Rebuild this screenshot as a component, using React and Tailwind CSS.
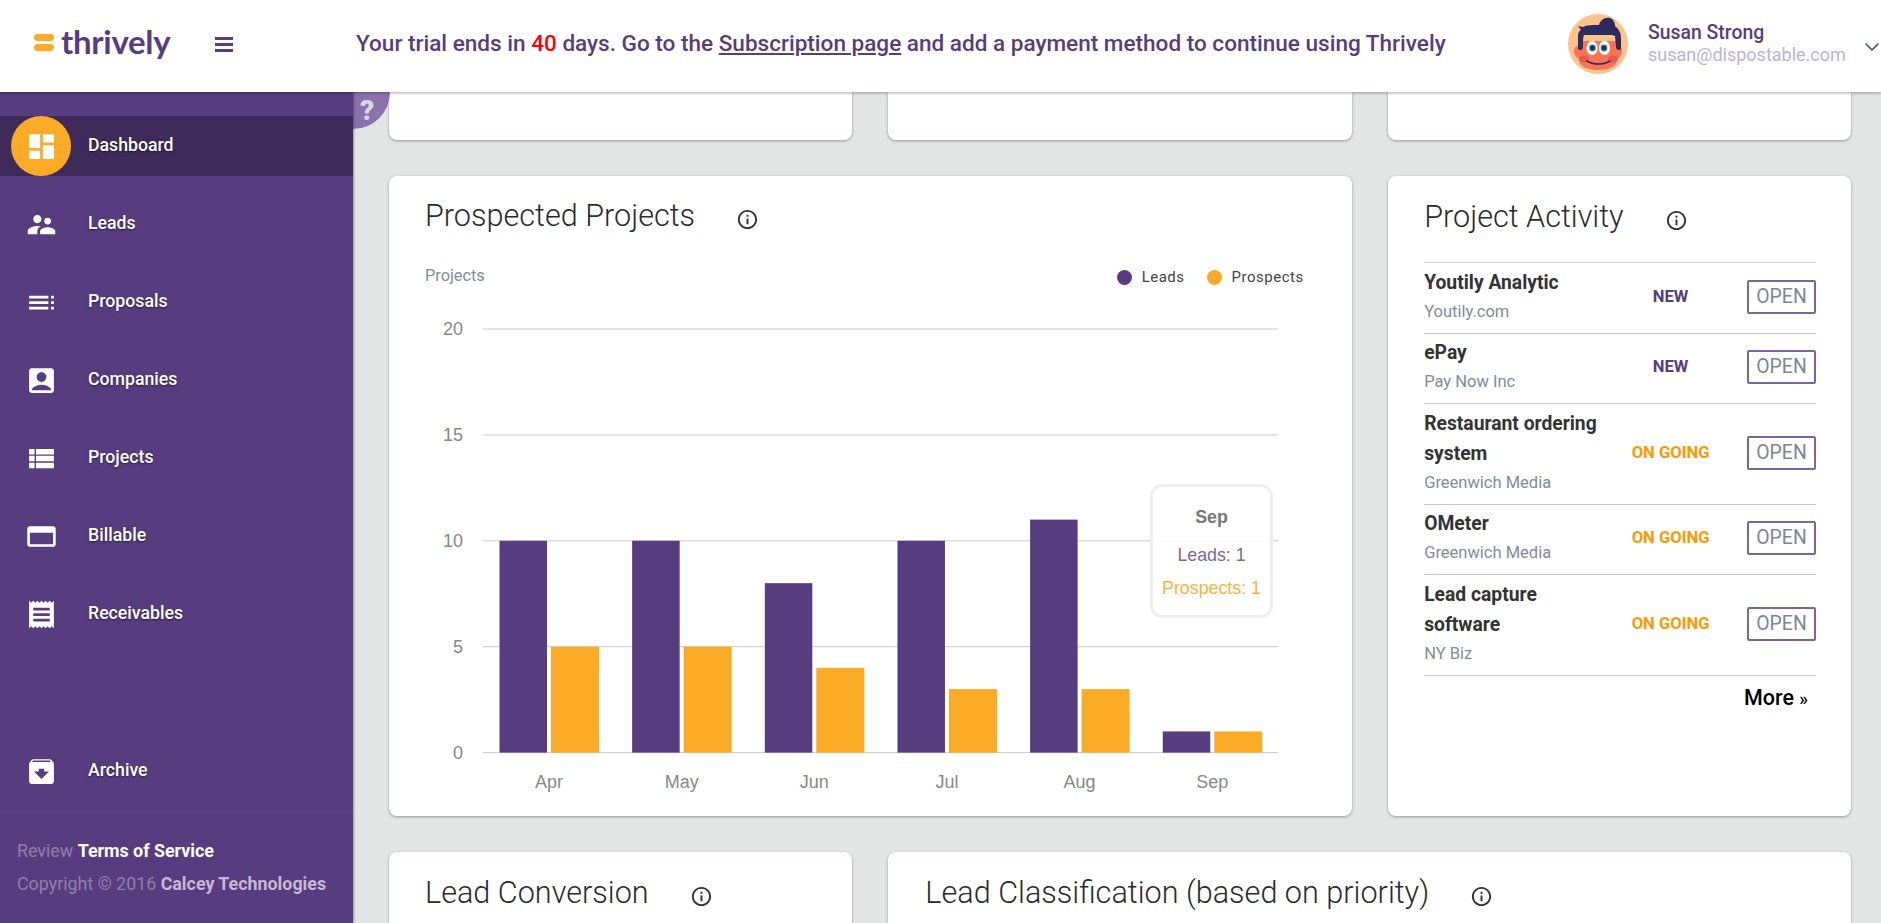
import React from 'react';
import {
  MdDashboard,
  MdSupervisorAccount,
  MdToc,
  MdAccountBox,
  MdViewList,
  MdReceipt,
  MdArchive,
  MdInfoOutline,
} from 'react-icons/md';
import { ChevronDown } from 'lucide-react';

const BillableIcon = ({ size = 31 }) => (
  <svg width={size} height={size} viewBox="0 0 24 24" fill="currentColor">
    <path d="M21 4H3c-1.1 0-2 .9-2 2v12c0 1.1.9 2 2 2h18c1.1 0 2-.9 2-2V6c0-1.1-.9-2-2-2zm0 14H3V9h18v9z" />
  </svg>
);

const navItems = [
  { label: 'Leads', icon: <MdSupervisorAccount size={33} /> },
  { label: 'Proposals', icon: <MdToc size={33} /> },
  { label: 'Companies', icon: <MdAccountBox size={33} /> },
  { label: 'Projects', icon: <MdViewList size={33} /> },
  { label: 'Billable', icon: <BillableIcon /> },
  { label: 'Receivables', icon: <MdReceipt size={33} /> },
];

const activity = [
  { name: 'Youtily Analytic', company: 'Youtily.com', status: 'NEW' },
  { name: 'ePay', company: 'Pay Now Inc', status: 'NEW' },
  { name: 'Restaurant ordering system', company: 'Greenwich Media', status: 'ON GOING' },
  { name: 'OMeter', company: 'Greenwich Media', status: 'ON GOING' },
  { name: 'Lead capture software', company: 'NY Biz', status: 'ON GOING' },
];

const chartData = [
  { month: 'Apr', leads: 10, prospects: 5 },
  { month: 'May', leads: 10, prospects: 5 },
  { month: 'Jun', leads: 8, prospects: 4 },
  { month: 'Jul', leads: 10, prospects: 3 },
  { month: 'Aug', leads: 11, prospects: 3 },
  { month: 'Sep', leads: 1, prospects: 1 },
];

const Avatar = () => (
  <svg width="60" height="60" viewBox="0 0 60 60">
    <circle cx="30" cy="30" r="30" fill="#fcc48c" />
    <path d="M11 27h38v18c0 7-7 11-19 11S11 52 11 45z" fill="#fb7355" />
    <path d="M6 37c0-4 3-6 6-6v14c-3 0-6-4-6-8zM54 37c0-4-3-6-6-6v14c3 0 6-4 6-8z" fill="#fb7355" />
    <path
      d="M10 35V22c0-3 1-5 3-6l-3-4 5 1c4-2 9-2 16-2 1-4 5-8 11-7 3 1 5 4 5 8 4 3 6 7 6 12v11c-2 2-5 1-5-2l-1-11c-1-1-3-1-6-1H16c-1 2-1 7-1 12 0 3-3 4-5 2z"
      fill="#2d2a60"
    />
    <ellipse cx="24" cy="34" rx="5.5" ry="7" fill="#fff" />
    <ellipse cx="36.5" cy="34" rx="5.5" ry="7" fill="#fff" />
    <circle cx="24.5" cy="34" r="3.4" fill="#2f8fb0" />
    <circle cx="36" cy="34" r="3.4" fill="#2f8fb0" />
    <circle cx="24.5" cy="34" r="2.4" fill="#2d2a60" />
    <circle cx="36" cy="34" r="2.4" fill="#2d2a60" />
    <ellipse cx="16" cy="45" rx="5" ry="3.5" fill="#e85a50" />
    <ellipse cx="45" cy="45" rx="5" ry="3.5" fill="#e85a50" />
    <path d="M19 47c6 4 17 4 23 0" fill="none" stroke="#2d2a60" strokeWidth="1.6" strokeLinecap="round" />
  </svg>
);

const Chart = () => {
  const y = (v) => 752.6 - v * 21.18;
  return (
    <svg className="block mt-[12px]" width="963" height="500" viewBox="389 300 963 500">
      {[0, 5, 10, 15, 20].map((t) => (
        <g key={t}>
          <line x1="483" x2="1278" y1={y(t)} y2={y(t)} stroke="#cacaca" strokeWidth="1" />
          <text x="463" y={y(t) + 6} textAnchor="end" fontFamily="'Liberation Sans', sans-serif" fontSize="18" fill="#888">
            {t}
          </text>
        </g>
      ))}
      {chartData.map((d, i) => {
        const x = 499.5 + i * 132.65;
        return (
          <g key={d.month}>
            <rect x={x} y={y(d.leads)} width="47.5" height={d.leads * 21.18} fill="#573d7f" />
            <rect x={x + 51.5} y={y(d.prospects)} width="48" height={d.prospects * 21.18} fill="#fcab26" />
            <text x={x + 49.5} y="788" textAnchor="middle" fontFamily="'Liberation Sans', sans-serif" fontSize="18" fill="#888">
              {d.month}
            </text>
          </g>
        );
      })}
    </svg>
  );
};

const CardTitle = ({ children, gap }) => (
  <div className="flex items-center h-[38px]">
    <h2 className="text-[30.6px] leading-[38px] font-light text-[#2b2b2b] mt-[1px]">{children}</h2>
    <span className={`${gap} mt-[9px] text-[#333]`}>
      <MdInfoOutline size={23} />
    </span>
  </div>
);

export default function App() {
  return (
    <div className="h-screen overflow-hidden flex flex-col bg-[#e3e5e4] font-['Roboto',sans-serif]">
      {/* Header */}
      <header className="relative z-20 h-[92px] shrink-0 bg-white flex items-center shadow-[0_1px_3px_rgba(0,0,0,0.35)]">
        <div className="w-[356px] shrink-0 flex items-center pl-[34px]">
          <div className="flex flex-col gap-[3px] -mt-[8px]">
            <span className="block w-[20px] h-[7px] rounded-full bg-[#fcab26]" />
            <span className="block w-[20px] h-[7px] rounded-full bg-[#fcab26]" />
          </div>
          <span className="ml-[7px] -mt-[10px] font-['Lato',sans-serif] font-bold text-[33px] leading-[40px] tracking-[-0.3px] text-[#573d7f]">
            thrively
          </span>
          <div className="ml-[45px] -mt-[3px] flex flex-col gap-[3px]">
            <span className="block w-[18px] h-[3px] bg-[#573d7f]" />
            <span className="block w-[18px] h-[3px] bg-[#573d7f]" />
            <span className="block w-[18px] h-[3px] bg-[#573d7f]" />
          </div>
        </div>
        <p className="flex-1 text-[22.55px] font-medium text-[#573d7f] whitespace-nowrap -mt-[4px]">
          Your trial ends in <span className="text-[#ff0000]">40</span> days. Go to the{' '}
          <span className="underline">Subscription page</span> and add a payment method to continue using Thrively
        </p>
        <div className="flex items-center -mr-[3px] -mt-[4px]">
          <Avatar />
          <div className="ml-[20px] w-[198px]">
            <div className="text-[19.4px] leading-[22px] font-medium text-[#573d7f]">Susan Strong</div>
            <div className="text-[18px] leading-[22px] text-[#bfb1d4]">susan@dispostable.com</div>
          </div>
          <span className="ml-[14px] mt-[6px] text-[#573d7f]">
            <ChevronDown size={24} strokeWidth={1.6} />
          </span>
        </div>
      </header>

      <div className="flex-1 flex min-h-0">
        {/* Sidebar */}
        <aside className="relative z-10 w-[353px] shrink-0 flex flex-col bg-[#573d7f] pt-[24px] text-white shadow-[1px_0_2px_rgba(0,0,0,0.35)]">
          <nav className="flex flex-col gap-[18px] text-[17.7px] font-medium [text-shadow:0_1px_2px_rgba(0,0,0,0.55)]">
            <div className="h-[60px] flex items-center bg-[#3f2b5a]">
              <div className="w-[82px] flex justify-center">
                <span className="w-[60px] h-[60px] rounded-full bg-[#fcab26] flex items-center justify-center">
                  <MdDashboard size={33} />
                </span>
              </div>
              <span className="pl-[6px] pb-[1px]">Dashboard</span>
            </div>
            {navItems.map((item) => (
              <div key={item.label} className="h-[60px] flex items-center">
                <div className="w-[82px] flex justify-center">{item.icon}</div>
                <span className="pl-[6px] pb-[2px]">{item.label}</span>
              </div>
            ))}
          </nav>
          <div className="mt-auto h-[60px] flex items-center text-[17.7px] font-medium [text-shadow:0_1px_2px_rgba(0,0,0,0.55)]">
            <div className="w-[82px] flex justify-center">
              <MdArchive size={33} />
            </div>
            <span className="pl-[6px] pb-[2px]">Archive</span>
          </div>
          <div className="mt-[9px] h-[113px] border-t border-[#5d4486] pl-[17px] pt-[23px] text-[17.85px] leading-[33px] text-[#8f7fab]">
            <div>
              Review <span className="font-bold text-white">Terms of Service</span>
            </div>
            <div>
              Copyright © 2016 <span className="font-bold text-[#c3b8d6]">Calcey Technologies</span>
            </div>
          </div>
        </aside>

        {/* Main */}
        <main className="relative flex-1 min-w-0 overflow-hidden pl-[36px] pr-[30px]">
          <div className="absolute left-0 top-0 w-[37px] h-[37px] rounded-br-full bg-[#8a73ab] pl-[7px] text-[#dcd5e6] text-[28px] leading-[38px] font-black">
            ?
          </div>
          <div className="grid grid-cols-3 gap-x-[36px] gap-y-[36px]">
            <div className="h-[48px] bg-white rounded-b-lg shadow-[0_1px_3px_rgba(0,0,0,0.35)]" />
            <div className="h-[48px] bg-white rounded-b-lg shadow-[0_1px_3px_rgba(0,0,0,0.35)]" />
            <div className="h-[48px] bg-white rounded-b-lg shadow-[0_1px_3px_rgba(0,0,0,0.35)]" />

            {/* Prospected Projects */}
            <section className="relative col-span-2 h-[640px] bg-white rounded-lg shadow-[0_1px_3px_rgba(0,0,0,0.35)]">
              <div className="pl-[36px] pr-[48px] pt-[20px]">
                <CardTitle gap="ml-[41px]">Prospected Projects</CardTitle>
                <div className="mt-[30px] h-[24px] flex items-center justify-between">
                  <span className="text-[16.3px] text-[#7f8c9a]">Projects</span>
                  <div className="flex items-center mt-[3px] text-[15px] tracking-[0.5px] text-[#444]">
                    <span className="w-[15px] h-[15px] rounded-full bg-[#573d7f]" />
                    <span className="ml-[10px]">Leads</span>
                    <span className="ml-[22px] w-[15px] h-[15px] rounded-full bg-[#fcab26]" />
                    <span className="ml-[10px]">Prospects</span>
                  </div>
                </div>
              </div>
              <Chart />
              <div className="absolute left-[761px] top-[308px] w-[123px] h-[134px] rounded-[12px] border-[3px] border-[#eeeeee] bg-white/90 font-['Liberation_Sans',sans-serif] text-[17.8px] leading-[20px] text-center">
                <div className="mt-[20px] font-bold text-[#777]">Sep</div>
                <div className="mt-[18px] text-[#7d66a0]">Leads: 1</div>
                <div className="mt-[13px] text-[#fbb040]">Prospects: 1</div>
              </div>
            </section>

            {/* Project Activity */}
            <section className="h-[640px] bg-white rounded-lg pl-[36.5px] pr-[35px] pt-[21px] shadow-[0_1px_3px_rgba(0,0,0,0.35)]">
              <CardTitle gap="ml-[41px]">Project Activity</CardTitle>
              <div className="mt-[27px] border-t border-[#d4d4d4]">
                {activity.map((row) => (
                  <div key={row.name} className="flex items-center border-b border-[#c8c8c8] pt-[4.5px] pb-[7px]">
                    <div className="w-[180px] shrink-0">
                      <div className="text-[19.3px] leading-[30px] font-bold text-[#333]">{row.name}</div>
                      <div className="text-[16.5px] leading-[28px] text-[#7f8c9a]">{row.company}</div>
                    </div>
                    <div
                      className={`flex-1 pr-[10px] mt-[1px] text-center text-[16.6px] font-bold ${
                        row.status === 'NEW' ? 'text-[#573d7f]' : 'text-[#ff9800]'
                      }`}
                    >
                      {row.status}
                    </div>
                    <button className="w-[69px] h-[34px] rounded-[2px] border-2 border-[#7a65a0] text-[19.4px] text-[#7b8794]">
                      OPEN
                    </button>
                  </div>
                ))}
              </div>
              <div className="mt-[7px] pr-[8px] text-right text-[21.5px] leading-[30px] font-medium text-black">
                More <span className="text-[18px]">»</span>
              </div>
            </section>

            {/* Bottom row */}
            <section className="h-[200px] bg-white rounded-lg pl-[36px] pt-[21px] shadow-[0_1px_3px_rgba(0,0,0,0.35)]">
              <CardTitle gap="ml-[41px]">Lead Conversion</CardTitle>
            </section>
            <section className="col-span-2 h-[200px] bg-white rounded-lg pl-[37px] pt-[21px] shadow-[0_1px_3px_rgba(0,0,0,0.35)]">
              <CardTitle gap="ml-[41px]">Lead Classification (based on priority)</CardTitle>
            </section>
          </div>
        </main>
      </div>
    </div>
  );
}
